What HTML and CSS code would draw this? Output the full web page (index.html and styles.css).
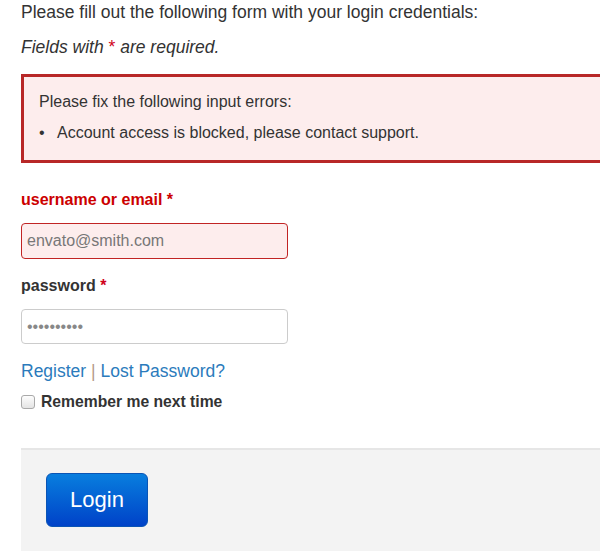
FILE: index.html
```html
<!DOCTYPE html>
<html>
<head>
<meta charset="utf-8">
<link rel="stylesheet" href="styles.css">
</head>
<body>
<div class="page">
  <p class="intro">Please fill out the following form with your login credentials:</p>
  <p class="note">Fields with <span class="req">*</span> are required.</p>
  <div class="errors">
    <p class="errors-title">Please fix the following input errors:</p>
    <ul class="errors-list">
      <li>Account access is blocked, please contact support.</li>
    </ul>
  </div>
  <div class="field field-error">
    <label class="label">username or email <span class="req">*</span></label>
    <input class="input" type="text" placeholder="envato@smith.com">
  </div>
  <div class="field field-pass">
    <label class="label">password <span class="req">*</span></label>
    <input class="input" type="password" value="abcdefghij">
  </div>
  <div class="links"><a href="#">Register</a> <span class="sep">|</span> <a href="#">Lost Password?</a></div>
  <label class="remember"><input type="checkbox" class="check"> Remember me next time</label>
  <div class="actions">
    <button class="btn">Login</button>
  </div>
</div>
</body>
</html>
```
FILE: styles.css
```css
html, body {
  margin: 0;
  padding: 0;
  background: #fff;
  overflow: hidden;
}
body {
  font-family: "Liberation Sans", Arial, sans-serif;
  color: #333;
}
.page {
  width: 640px;
  padding-left: 21px;
}
.intro {
  margin: 0;
  padding-top: 2px;
  font-size: 17.5px;
  line-height: 20px;
}
.note {
  margin: 15px 0 0;
  font-size: 17.5px;
  line-height: 20px;
  font-style: italic;
}
.req {
  color: #d0021b;
  font-style: normal;
}
.errors {
  margin-top: 17px;
  border: 3px solid #b82727;
  background: #fdeded;
  padding: 16px 15px 18px;
  font-size: 16px;
  line-height: 18px;
}
.errors-title {
  margin: 0;
}
.errors-list {
  margin: 13px 0 0;
  padding: 0;
  list-style: none;
}
.errors-list li::before {
  content: "\2022";
  display: inline-block;
  width: 18px;
}
.label {
  display: block;
  font-weight: bold;
  font-size: 16px;
  line-height: 18px;
  color: #333;
}
.input {
  display: block;
  box-sizing: border-box;
  width: 267px;
  padding: 0 5px;
  border: 1px solid #ccc;
  border-radius: 4px;
  font-family: "Liberation Sans", Arial, sans-serif;
  font-size: 16px;
  color: #555;
  background: #fff;
}
.input::placeholder {
  color: #777;
}
.field-error .label {
  margin-top: 28px;
  color: #c00;
}
.field-error .label .req {
  color: #c00;
}
.field-error .input {
  height: 36px;
  margin-top: 14px;
  border-color: #c12424;
  background: #fdeded;
}
.field-pass .label {
  margin-top: 18px;
}
.field-pass .input {
  height: 35px;
  margin-top: 14px;
  color: #888;
}
.links {
  margin-top: 17px;
  font-size: 17.5px;
  line-height: 20px;
}
.links a {
  color: #2b7bbc;
  text-decoration: none;
}
.sep {
  color: #b59a8a;
}
.remember {
  display: flex;
  align-items: center;
  gap: 6px;
  margin-top: 12px;
  font-weight: bold;
  font-size: 15.7px;
  line-height: 18px;
}
.check {
  appearance: none;
  -webkit-appearance: none;
  box-sizing: border-box;
  margin: 0;
  width: 14px;
  height: 14px;
  border: 1px solid #a9a9a9;
  border-radius: 3px;
  background: linear-gradient(#fdfdfd, #e4e4e4);
}
.actions {
  margin-top: 37px;
  border-top: 2px solid #e6e6e6;
  background: #f3f3f3;
  padding: 23px 25px 40px;
}
.btn {
  display: block;
  width: 102px;
  height: 54px;
  border: 1px solid #0a54b5;
  border-radius: 6px;
  background: linear-gradient(#087ede, #0042c8);
  color: #fff;
  font-family: "Liberation Sans", Arial, sans-serif;
  font-size: 22px;
  cursor: pointer;
}
```
